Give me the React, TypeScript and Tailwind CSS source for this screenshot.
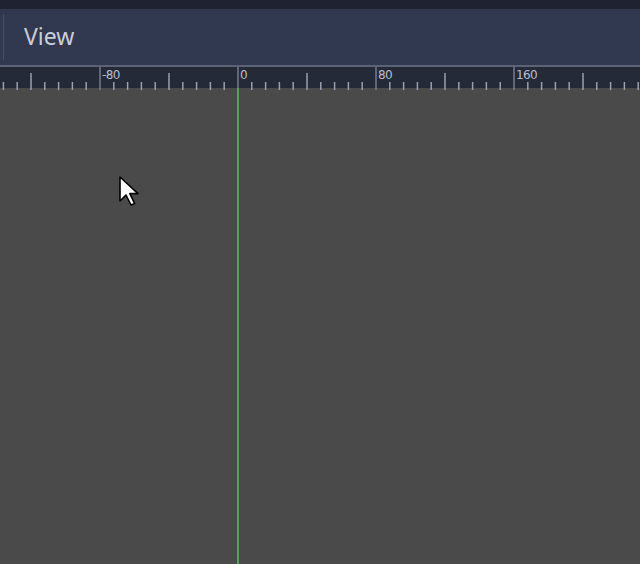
import React from 'react';

const ORIGIN = 238;
const STEP = 13.8; // px per 8 units

function Ruler() {
  const ticks: React.ReactNode[] = [];
  for (let i = -18; i <= 30; i++) {
    const x = ORIGIN + i * STEP;
    if (x < -2 || x > 642) continue;
    const m = ((i % 10) + 10) % 10;
    const y1 = m === 0 ? 0 : m === 5 ? 6 : 15;
    ticks.push(
      <line key={i} x1={x} x2={x} y1={y1} y2={23} stroke={m === 0 ? '#8a90a0' : '#9aa0ae'} strokeWidth={m === 0 ? 1.2 : 1.5} />
    );
  }
  const labels = [-80, 0, 80, 160];
  return (
    <div className="relative h-[23px] bg-[#252a39] border-t-2 border-[#5c6375]">
      <svg width="640" height="23" className="block">
        {ticks}
      </svg>
      {labels.map((v) => (
        <span
          key={v}
          className="absolute top-[2px] text-[12px] leading-none text-[#b8bcc8] tracking-[-0.6px]"
          style={{ left: ORIGIN + (v / 8) * STEP + 2, fontFamily: '"DejaVu Sans", sans-serif' }}
        >
          {v}
        </span>
      ))}
    </div>
  );
}

function Cursor() {
  return (
    <svg width="24" height="34" viewBox="0 0 12 17" className="absolute left-[118px] top-[87px]">
      <path d="M1 1 L1 13 L4 10 L6.5 15 L8.3 14.2 L5.9 9.3 L10 9.3 Z" fill="#ffffff" stroke="#000000" strokeWidth="0.8" strokeLinejoin="round" />
    </svg>
  );
}

export default function App() {
  return (
    <div className="w-[640px] h-[564px] flex flex-col overflow-hidden bg-[#4a4a4a]" style={{ fontFamily: '"Noto Sans", sans-serif' }}>
      <div className="h-[9px] bg-[#1e2231]" />
      <div className="h-[56px] bg-[#313950] flex items-center">
        <div className="ml-[3px] w-px h-[46px] bg-[#454d63]" />
        <span className="ml-[20px] text-[23px] text-[#c9cdd8] leading-none pb-[1px]">View</span>
      </div>
      <Ruler />
      <div className="relative flex-1 flex">
        <div className="w-[237px]" />
        <div className="w-[2px] bg-[#5d9e63]" />
        <Cursor />
      </div>
    </div>
  );
}
